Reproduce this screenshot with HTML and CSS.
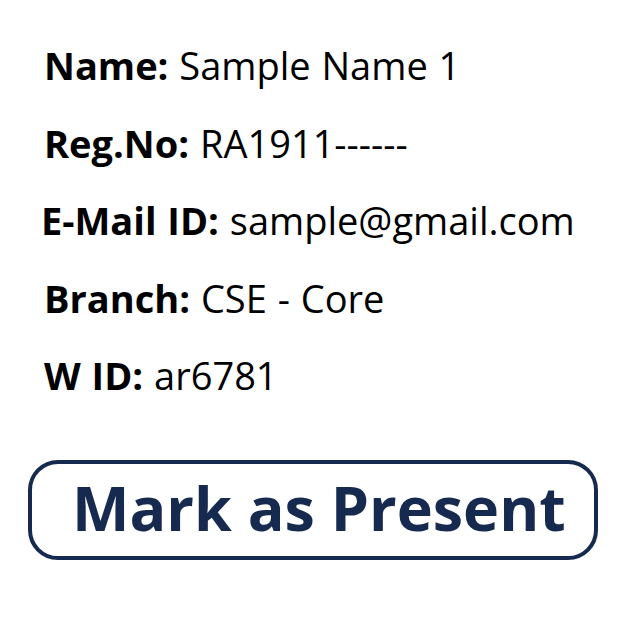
FILE: index.html
```html
<!DOCTYPE html>
<html>
<head>
<meta charset="utf-8">
<link rel="stylesheet" href="styles.css">
</head>
<body>
<div class="card">
  <div class="info">
    <div class="row"><b>Name:</b> Sample Name 1</div>
    <div class="row"><b>Reg.No:</b> RA1911------</div>
    <div class="row email"><b>E-Mail ID:</b> sample@gmail.com</div>
    <div class="row"><b>Branch:</b> CSE - Core</div>
    <div class="row"><b>W ID:</b> ar6781</div>
  </div>
  <button class="mark">Mark as Present</button>
</div>
</body>
</html>
```
FILE: styles.css
```css
html, body {
  margin: 0;
  padding: 0;
  background: #ffffff;
}
.card {
  width: 622px;
  height: 634px;
  box-sizing: border-box;
  padding: 27px 0 0 44px;
  font-family: "Open Sans", "Noto Sans", sans-serif;
  color: #000;
}
.info {
  display: flex;
  flex-direction: column;
}
.row {
  font-size: 38px;
  line-height: 77.6px;
  white-space: nowrap;
  word-spacing: 1px;
}
.row b {
  font-weight: 700;
}
.email {
  margin-left: -3px;
}
.mark {
  display: block;
  margin: 45px 0 0 -16px;
  width: 570px;
  height: 100px;
  box-sizing: border-box;
  border: 4px solid #16294f;
  border-radius: 30px;
  background: #fff;
  color: #16294f;
  font-family: "Open Sans", "Noto Sans", sans-serif;
  font-weight: 700;
  font-size: 61px;
  text-align: left;
  padding: 0 0 4px 40px;
  line-height: 1;
  white-space: nowrap;
}
```
